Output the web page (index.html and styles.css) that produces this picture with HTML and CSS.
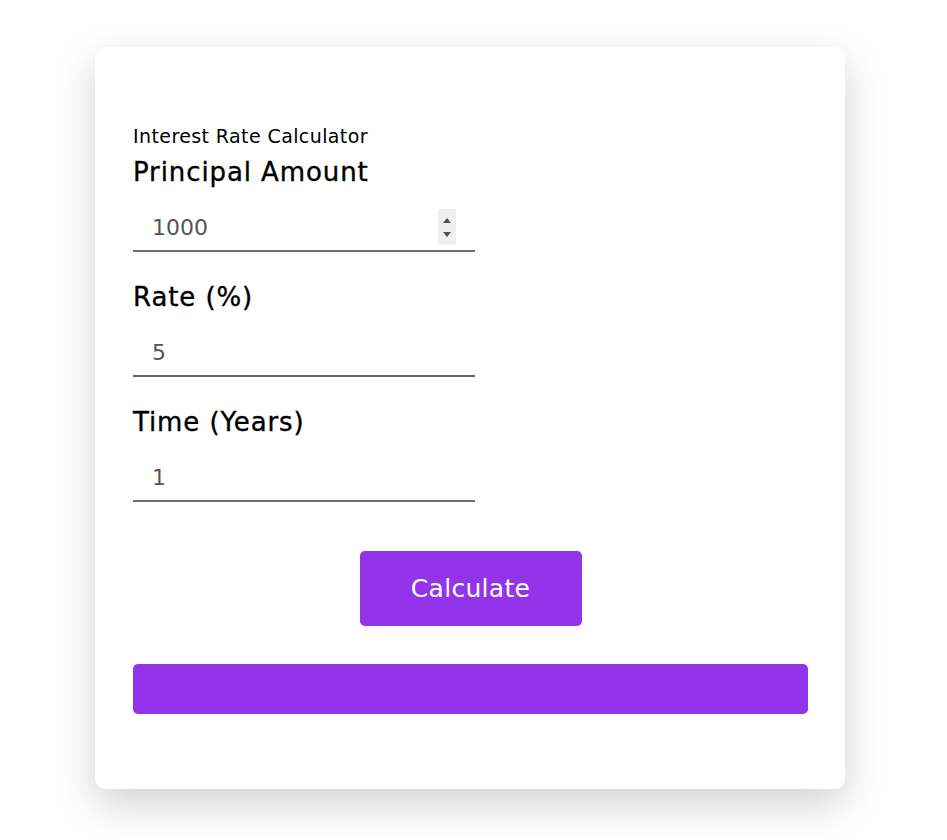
FILE: index.html
```html
<!DOCTYPE html>
<html>
<head>
<meta charset="utf-8">
<link rel="stylesheet" href="styles.css">
</head>
<body>
<div class="card">
  <div class="title">Interest Rate Calculator</div>
  <div class="group">
    <label class="label">Principal Amount</label>
    <div class="field">
      <input class="input" type="text" value="1000">
      <span class="spin"><span class="up"></span><span class="down"></span></span>
    </div>
  </div>
  <div class="group">
    <label class="label">Rate (%)</label>
    <div class="field"><input class="input" type="text" value="5"></div>
  </div>
  <div class="group">
    <label class="label">Time (Years)</label>
    <div class="field"><input class="input" type="text" value="1"></div>
  </div>
  <div class="actions"><button class="btn">Calculate</button></div>
  <div class="result"></div>
</div>
</body>
</html>
```

FILE: styles.css
```css
html, body {
  margin: 0;
  background: #fff;
  font-family: "DejaVu Sans", "Open Sans", sans-serif;
}
body {
  padding: 47px 0 60px 95px;
}
.card {
  width: 750px;
  box-sizing: border-box;
  padding: 76px 37px 75px 38px;
  background: #fff;
  border-radius: 10px;
  box-shadow: 0 15px 40px rgba(0, 0, 0, 0.18);
}
.title {
  font-size: 19px;
  line-height: 26px;
  letter-spacing: 0.4px;
  color: #000;
}
.group {
  display: flex;
  flex-direction: column;
}
.label {
  font-size: 26px;
  line-height: 34px;
  letter-spacing: 0.9px;
  color: #000;
  -webkit-text-stroke: 0.35px #000;
  margin: 6px 0 14px;
}
.group + .group .label { margin-top: 28px; }
.field {
  position: relative;
  width: 342px;
}
.input {
  display: block;
  width: 100%;
  box-sizing: border-box;
  border: none;
  border-bottom: 2px solid #6b6b6b;
  padding: 10px 19px 7px 19px;
  font-family: inherit;
  font-size: 22px;
  line-height: 30px;
  color: #555;
  background: transparent;
  outline: none;
}
.spin {
  position: absolute;
  right: 19px;
  top: 6px;
  width: 18px;
  height: 36px;
  background: #efefef;
}
.spin .up, .spin .down {
  position: absolute;
  left: 5px;
  width: 0;
  height: 0;
  border-left: 4px solid transparent;
  border-right: 4px solid transparent;
}
.spin .up { top: 9px; border-bottom: 5px solid #4f4f4f; }
.spin .down { top: 23px; border-top: 5px solid #4f4f4f; }
.actions {
  display: flex;
  justify-content: center;
  margin-top: 49px;
}
.btn {
  width: 222px;
  height: 75px;
  border: none;
  border-radius: 5px;
  background: #9333ea;
  color: #fff;
  font-family: inherit;
  font-size: 25px;
  letter-spacing: 0.3px;
}
.result {
  margin-top: 38px;
  height: 50px;
  border-radius: 5px;
  background: #9333ea;
}
```
